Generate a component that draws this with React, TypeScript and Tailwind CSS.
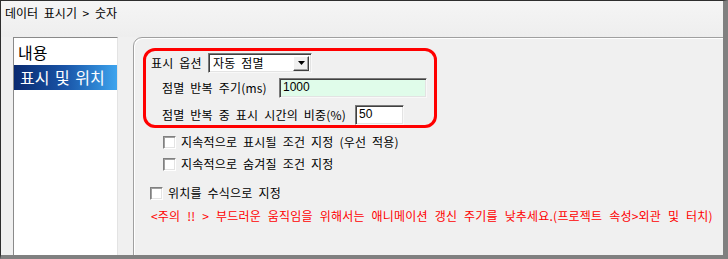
export default function App() {
  const sunken =
    "border border-t-[#7a7a7a] border-l-[#7a7a7a] border-b-[#f8f8f8] border-r-[#f8f8f8] shadow-[inset_1px_1px_0_#404040,inset_-1px_-1px_0_#e3e3e3]";
  const Check = () => (
    <div className="w-[13px] h-[13px] shrink-0 bg-white border border-t-[#808080] border-l-[#808080] border-b-[#ffffff] border-r-[#ffffff] shadow-[inset_1px_1px_0_#a0a0a0,inset_-1px_-1px_0_#e3e3e3]" />
  );
  return (
    <div className="w-[728px] h-[259px] overflow-hidden bg-[#f0f0f0] border-t border-l border-t-[#2e2e2e] border-l-[#2e2e2e] border-r-[5px] border-b-4 border-r-[#808080] border-b-[#808080] flex flex-col text-black font-['Noto_Sans_CJK_KR',sans-serif]">
      <div className="h-[36px] shrink-0 pl-[4px] pt-[3px] text-[12px] leading-[17px] [word-spacing:3px] bg-gradient-to-b from-[#f5f5f5] to-[#eeeeee]">
        데이터 표시기 &gt; 숫자
      </div>
      <div className="flex items-start flex-1 min-h-0">
        <div className="ml-[12px] w-[105px] h-[240px] shrink-0 bg-white border border-t-[#8a8a8a] border-l-[#8a8a8a] border-b-[#ffffff] border-r-[#e3e3e3] pt-[2px] text-[16px] leading-[25px]">
          <div className="h-[25px] pl-[4px]">내용</div>
          <div className="h-[25px] pl-[6px] text-white bg-gradient-to-r from-[#0a2a70] via-[#1a55a8] to-[#3ea4ee] [word-spacing:2px]">
            표시 및 위치
          </div>
        </div>
        <div className="ml-[15px] w-[620px] h-[240px] shrink-0 rounded-[9px] border border-[#a0a0a0] shadow-[inset_1px_1px_0_#ffffff] pl-[9px] pt-[10px] text-[12px] [word-spacing:3px] tracking-[0.2px]">
          <div className="w-[294px] h-[80px] rounded-[12px] border-[3px] border-[#ff0000] flex flex-col">
            <div className="mt-[2px] h-[20px] flex items-center pl-[5px]">
              <span className="w-[57px] shrink-0">표시 옵션</span>
              <div className={`w-[104px] h-[20px] bg-white flex items-center justify-between pl-[4px] pr-[2px] ${sunken}`}>
                <span className="leading-[14px]">자동 점멸</span>
                <div className="w-[16px] h-[15px] bg-[#f0f0f0] border border-t-[#ffffff] border-l-[#ffffff] border-b-[#404040] border-r-[#404040] shadow-[inset_-1px_-1px_0_#a0a0a0] flex items-center justify-center">
                  <svg width="7" height="4" viewBox="0 0 7 4">
                    <path d="M0 0H7L3.5 4Z" fill="#000" />
                  </svg>
                </div>
              </div>
            </div>
            <div className="mt-[5px] h-[20px] flex items-center pl-[16px]">
              <span className="w-[117px] shrink-0">점멸 반복 주기(ms)</span>
              <div className={`w-[148px] h-[20px] bg-[#e0fcea] pl-[3px] leading-[16px] tracking-normal font-['Liberation_Sans',sans-serif] ${sunken}`}>
                1000
              </div>
            </div>
            <div className="mt-[7px] h-[20px] flex items-center pl-[16px]">
              <span className="w-[193px] shrink-0">점멸 반복 중 표시 시간의 비중(%)</span>
              <div className={`w-[49px] h-[20px] bg-white pl-[3px] leading-[16px] tracking-normal font-['Liberation_Sans',sans-serif] ${sunken}`}>
                50
              </div>
            </div>
          </div>
          <div className="mt-[6px] h-[16px] flex items-center ml-[20px] gap-[5px]">
            <Check />
            <span>지속적으로 표시될 조건 지정 (우선 적용)</span>
          </div>
          <div className="mt-[6px] h-[16px] flex items-center ml-[20px] gap-[5px]">
            <Check />
            <span>지속적으로 숨겨질 조건 지정</span>
          </div>
          <div className="mt-[13px] h-[16px] flex items-center ml-[7px] gap-[5px]">
            <Check />
            <span>위치를 수식으로 지정</span>
          </div>
          <div className="mt-[6px] h-[17px] flex items-center ml-[8px] text-[#ff0000] tracking-[0.2px] [word-spacing:4px] whitespace-nowrap">
            &lt;주의 !! &gt; 부드러운 움직임을 위해서는 애니메이션 갱신 주기를 낮추세요.(프로젝트 속성&gt;외관 및 터치)
          </div>
        </div>
      </div>
    </div>
  );
}
